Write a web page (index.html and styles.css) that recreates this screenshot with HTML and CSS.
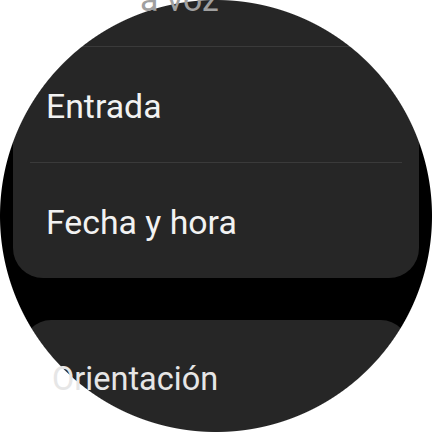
FILE: index.html
```html
<!DOCTYPE html>
<html>
<head>
    <title>Ajustes</title>
    <link rel="stylesheet" href="styles.css">
</head>
<body>
    <div class="screen">
        <div class="list">
            <!-- Grupo general -->
            <div class="card first">
                <div class="row top-row"><span class="label faded">a voz</span></div>
                <div class="divider"></div>
                <div class="row"><span class="label">Entrada</span></div>
                <div class="divider"></div>
                <div class="row"><span class="label">Fecha y hora</span></div>
            </div>

            <!-- Grupo pantalla -->
            <div class="card small">
                <div class="row"><span class="label">Orientación</span></div>
            </div>
        </div>
        <div class="bezel"></div>
    </div>
</body>
</html>
```

FILE: styles.css
```css
:root {
    --card-bg: #262626;
    --line: #3a3a3a;
    --text: #f2f2f2;
}

body {
    margin: 0;
    background: #ffffff;
    font-family: 'Roboto', 'Noto Sans', sans-serif;
}

.screen {
    position: relative;
    width: 432px;
    height: 432px;
    background: #000;
    overflow: hidden;
}

.list {
    display: flex;
    flex-direction: column;
    gap: 42px;
    margin-top: -69px;
}

.card {
    background: var(--card-bg);
    border-radius: 30px;
    margin: 0 13px;
}

.row {
    height: 115px;
    display: flex;
    align-items: center;
    padding: 4px 0 0 33px;
    box-sizing: border-box;
}

.top-row {
    align-items: flex-end;
    padding: 0 0 27px 127px;
}

.divider {
    height: 1px;
    margin: 0 17px;
    background: var(--line);
}

.label {
    position: relative;
    z-index: 2;
    font-size: 33.8px;
    color: var(--text);
    white-space: nowrap;
}

.faded {
    color: #a0a0a0;
}

.card.small {
    margin: 0 23px;
    border-radius: 28px;
}

.card.small .row {
    padding: 2px 0 0 29px;
}

.card.small .label {
    font-size: 32.5px;
    color: #e6e6e6;
}

/* borde redondo del reloj */
.bezel {
    position: absolute;
    inset: 0;
    z-index: 1;
    background: radial-gradient(circle 217px at 216px 216px, transparent 215.5px, #ffffff 216.5px);
}
```
